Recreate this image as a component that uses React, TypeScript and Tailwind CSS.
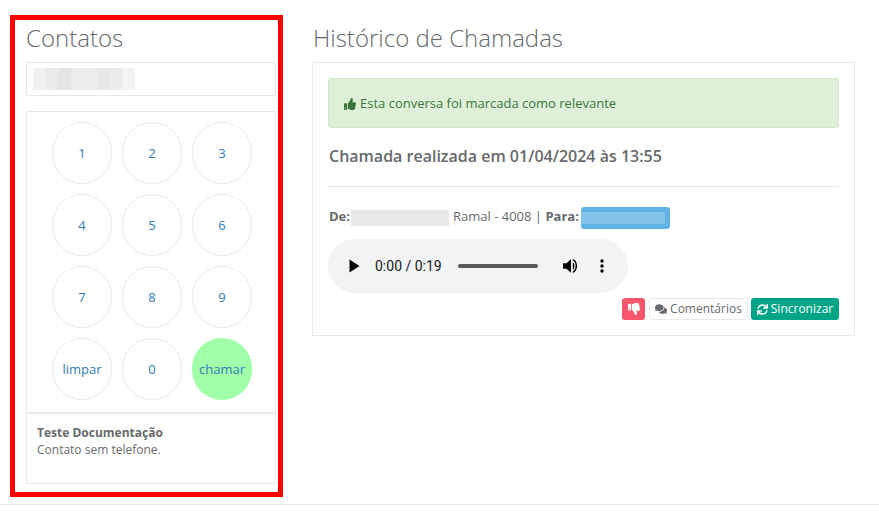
import React from "react";
import { FaThumbsUp, FaThumbsDown, FaComments, FaSync } from "react-icons/fa";

const keys = ["1", "2", "3", "4", "5", "6", "7", "8", "9", "limpar", "0", "chamar"];

export default function App() {
  return (
    <div className="w-[879px] h-[511px] overflow-hidden bg-white text-[#676a6c] text-[13px] font-['Open_Sans',sans-serif]">
      <div className="flex h-[504px] pt-[15px] pl-[10px]">
        <aside className="w-[273px] h-[482px] border-[5px] border-[#ff0000] pl-[11px] pr-[2px] flex flex-col">
          <h2 className="text-[24px] leading-[26px] font-light h-[42px] pt-[5px]">Contatos</h2>
          <div className="h-[34px] border border-[#e5e6e7] rounded-[2px] flex items-center pl-[6px]">
            <div className="flex h-[22px] w-[102px]">
              <div className="w-[13px] bg-[#f0f1f2]" />
              <div className="w-[13px] bg-[#e9eaeb]" />
              <div className="w-[12px] bg-[#e4e5e7]" />
              <div className="w-[26px] bg-[#ebecec]" />
              <div className="w-[13px] bg-[#e6e7e7]" />
              <div className="w-[12px] bg-[#eaebeb]" />
              <div className="w-[13px] bg-[#f2f3f4]" />
            </div>
          </div>
          <div className="mt-[15px] flex-1 border border-[#e7eaec] flex flex-col mb-[8px]">
            <div className="h-[302px] pt-[10px] pl-[25px] border-b-2 border-[#e7eaec]">
              <div className="grid grid-cols-[60px_60px_60px] gap-[10px]">
                {keys.map((k) => (
                  <div
                    key={k}
                    className={
                      k === "chamar"
                        ? "h-[62px] pt-[1px] rounded-full bg-[#a0ffa8] flex items-center justify-center text-[#337ab7]"
                        : "h-[62px] pt-[1px] rounded-full border border-[#e9e9e9] flex items-center justify-center text-[#337ab7]"
                    }
                  >
                    {k}
                  </div>
                ))}
              </div>
            </div>
            <div className="pt-[10px] pl-[10px] text-[12px] leading-[17px]">
              <div className="font-bold">Teste Documentação</div>
              <div>Contato sem telefone.</div>
            </div>
          </div>
        </aside>
        <main className="ml-[29px] w-[543px]">
          <h2 className="text-[24px] leading-[26px] font-light h-[47px] pt-[10px] pl-[1px]">Histórico de Chamadas</h2>
          <section className="h-[274px] border border-[#e7eaec] px-[15px] pt-[15px]">
            <div className="h-[50px] pt-[1px] bg-[#dff0d8] border border-[#d6e9c6] rounded-[3px] text-[#3c763d] flex items-center pl-[15px] gap-[4px] text-[13px]">
              <FaThumbsUp className="text-[12px]" />
              <span>Esta conversa foi marcada como relevante</span>
            </div>
            <div className="mt-[17px] pl-[1px] text-[16px] leading-[22px] font-semibold">Chamada realizada em 01/04/2024 às 13:55</div>
            <div className="mt-[19px] border-t border-[#e7eaec]" />
            <div className="mt-[20px] pl-[1px] h-[22px] flex items-center text-[13px]">
              <b className="font-bold -mt-[2px]">De:</b>
              <div className="w-[98px] h-[16px] ml-[1px] bg-[#e8e8e8]" />
              <span className="ml-[4px] -mt-[2px]">Ramal - 4008 | <b>Para:</b></span>
              <div className="w-[89px] h-[22px] ml-[2px] rounded-[3px] bg-[#5fb4e5] p-[5px] pl-0">
                <div className="h-full bg-[#84c3e8]" />
              </div>
            </div>
            <div className="mt-[10px] w-[300px] h-[54px] rounded-[27px] bg-[#f1f3f4] flex items-center pl-[21px] text-[14px] text-[#1a1a1a] font-['Roboto',sans-serif]">
              <svg width="11" height="14" viewBox="0 0 11 14"><path d="M0.5 0.5 L10.5 7 L0.5 13.5 Z" fill="#000" /></svg>
              <span className="ml-[15px]">0:00 / 0:19</span>
              <div className="ml-[16px] w-[80px] h-[4px] rounded-full bg-[#595959]" />
              <svg className="ml-[25px]" width="16" height="16" viewBox="0 0 16 16">
                <path d="M0 5.2 H3.4 L8 1.2 V14.8 L3.4 10.8 H0 Z" fill="#000" />
                <path d="M9.8 4.2 C12 5 12 11 9.8 11.8 Z" fill="#000" />
                <path d="M9.8 1 C15.5 2.4 15.5 13.6 9.8 15 V13.4 C13.6 12 13.6 4 9.8 2.6 Z" fill="#000" />
              </svg>
              <svg className="ml-[21px]" width="4" height="14" viewBox="0 0 4 14" fill="#000">
                <circle cx="2" cy="2" r="1.7" />
                <circle cx="2" cy="7" r="1.7" />
                <circle cx="2" cy="12" r="1.7" />
              </svg>
            </div>
            <div className="mt-[5px] flex justify-end text-[12px]">
              <div className="w-[23px] h-[22px] rounded-[3px] bg-[#f8566d] text-white flex items-center justify-center text-[12px]">
                <FaThumbsDown />
              </div>
              <div className="ml-[4px] w-[99px] h-[22px] rounded-[3px] border border-[#e7eaec] flex items-center justify-center gap-[3px]">
                <FaComments className="text-[12px]" />
                <span>Comentários</span>
              </div>
              <div className="ml-[3px] w-[88px] h-[22px] rounded-[3px] bg-[#00a587] text-white flex items-center justify-center gap-[3px]">
                <FaSync className="text-[11px]" />
                <span>Sincronizar</span>
              </div>
            </div>
          </section>
        </main>
      </div>
      <div className="border-t border-[#e7eaec]" />
    </div>
  );
}
